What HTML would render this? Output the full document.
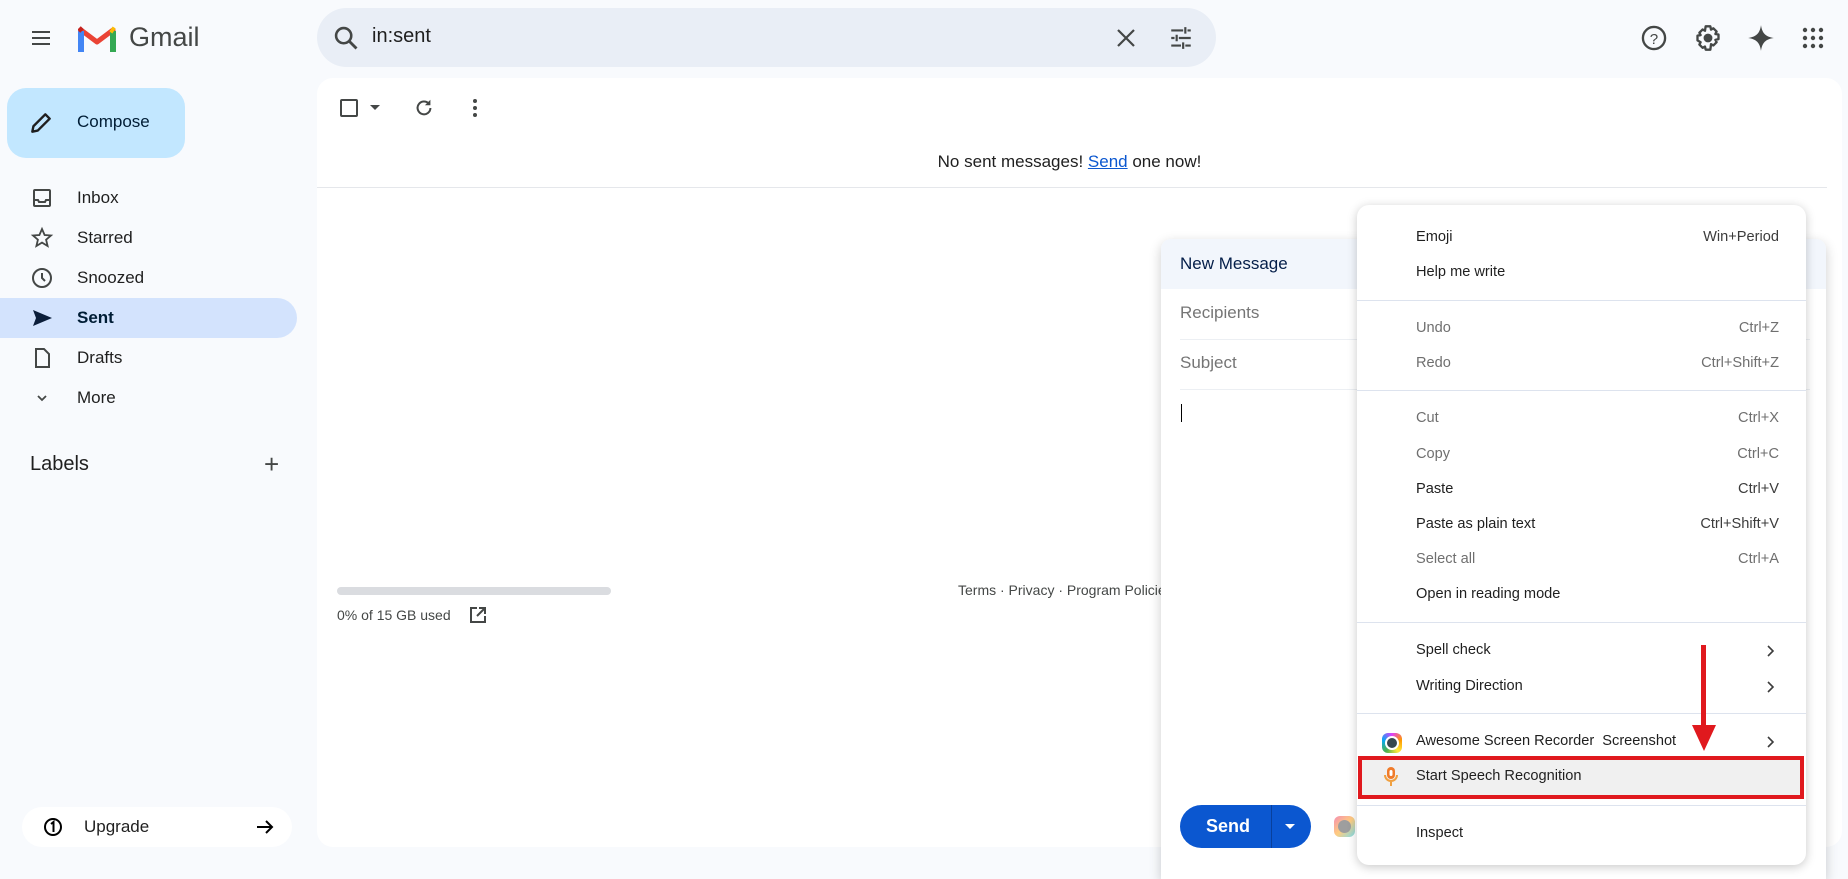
<!DOCTYPE html>
<html><head><meta charset="utf-8"><style>
*{box-sizing:border-box;margin:0;padding:0}
body{width:1848px;height:863px;overflow:hidden;background:#f8fafd;font-family:"Liberation Sans",Arial,sans-serif;color:#1f1f1f;position:relative}
.a{position:absolute}
.nav{position:absolute;left:0;width:297px;height:40px;font-size:17px;display:flex;align-items:center}
.nav .t{position:absolute;left:77px}
.nav svg{position:absolute;left:30px;top:8px}
.mi{position:absolute;left:1416px;font-size:14.6px;color:#1f1f1f}
.ms{position:absolute;right:69px;font-size:14.6px;color:#3c3c3c}
.ch{position:absolute;right:70px;width:14px;height:14px}
.dis{color:#6f6f6f}
.sep{position:absolute;left:1357px;width:449px;height:1px;background:#dde3ee}
</style></head><body>
<!-- header -->
<svg class="a" style="left:29px;top:26px" width="24" height="24" viewBox="0 0 24 24"><path d="M3 6h18M3 12h18M3 18h18" stroke="#444746" stroke-width="2"/></svg>
<svg class="a" style="left:78px;top:24px" width="38" height="29" viewBox="0 0 38 29"><path d="M3 28V6l16 12L35 6v22" fill="none" stroke="#ea4335" stroke-width="5" stroke-linejoin="round"/><path d="M3 28V7" stroke="#4285f4" stroke-width="6"/><path d="M35 28V7" stroke="#34a853" stroke-width="6"/><path d="M33 5l3 2" stroke="#fbbc04" stroke-width="6"/><path d="M1 4l3 3" stroke="#c5221f" stroke-width="5"/></svg>
<div class="a" style="left:129px;top:22px;font-size:27px;color:#444746">Gmail</div>
<div class="a" style="left:317px;top:8px;width:899px;height:59px;border-radius:30px;background:#e9eef6"></div>
<svg class="a" style="left:332px;top:24px" width="28" height="28" viewBox="0 0 24 24"><circle cx="10" cy="10" r="6.5" fill="none" stroke="#444746" stroke-width="2.2"/><path d="M15 15l6 6" stroke="#444746" stroke-width="2.4"/></svg>
<div class="a" style="left:372px;top:25px;font-size:20px;color:#1f1f1f">in:sent</div>
<svg class="a" style="left:1115px;top:27px" width="22" height="22" viewBox="0 0 22 22"><path d="M3 3l16 16M19 3L3 19" stroke="#444746" stroke-width="2.2"/></svg>
<svg class="a" style="left:1168px;top:25px" width="26" height="26" viewBox="0 0 24 24" stroke="#444746" stroke-width="2" fill="none"><path d="M3 5h11M18 5h3M16 2v6M3 12h3M10 12h11M8 9v6M3 19h9M16 19h5M14 16v6"/></svg>
<svg class="a" style="left:1640px;top:24px" width="28" height="28" viewBox="0 0 24 24"><circle cx="12" cy="12" r="9.5" fill="none" stroke="#444746" stroke-width="2"/><text x="12" y="17" font-size="13" text-anchor="middle" fill="#444746" font-family="Liberation Sans">?</text></svg>
<svg class="a" style="left:1694px;top:24px" width="28" height="28" viewBox="0 0 24 24" fill="none" stroke="#444746" stroke-width="2"><path d="M10 2h4l.6 2.8 2-1.1 2.8 2.8-1.1 2 2.7.5v4l-2.7.6 1.1 2-2.8 2.8-2-1.1L14 22h-4l-.6-2.7-2 1.1-2.8-2.8 1.1-2L3 14v-4l2.7-.5-1.1-2 2.8-2.8 2 1.1z" stroke-linejoin="round"/><circle cx="12" cy="12" r="2.8" fill="#444746"/></svg>
<svg class="a" style="left:1747px;top:24px" width="28" height="28" viewBox="0 0 24 24"><path d="M12 1C13 8 16 11 23 12 16 13 13 16 12 23 11 16 8 13 1 12 8 11 11 8 12 1z" fill="#444746"/></svg>
<svg class="a" style="left:1801px;top:26px" width="24" height="24" viewBox="0 0 24 24" fill="#444746"><circle cx="4" cy="4" r="2.2"/><circle cx="12" cy="4" r="2.2"/><circle cx="20" cy="4" r="2.2"/><circle cx="4" cy="12" r="2.2"/><circle cx="12" cy="12" r="2.2"/><circle cx="20" cy="12" r="2.2"/><circle cx="4" cy="20" r="2.2"/><circle cx="12" cy="20" r="2.2"/><circle cx="20" cy="20" r="2.2"/></svg>
<!-- sidebar -->
<div class="a" style="left:7px;top:88px;width:178px;height:70px;border-radius:19px;background:#c2e7ff"></div>
<svg class="a" style="left:28px;top:110px" width="26" height="26" viewBox="0 0 24 24"><path d="M4 20l1-5L16 4l4 4L9 19z" fill="none" stroke="#1f1f1f" stroke-width="2.2" stroke-linejoin="round"/></svg>
<div class="a" style="left:77px;top:112px;font-size:17px;color:#001d35">Compose</div>
<div class="a" style="left:0;top:298px;width:297px;height:40px;border-radius:0 20px 20px 0;background:#d3e3fd"></div>
<div class="nav" style="top:178px"><svg width="24" height="24" viewBox="0 0 24 24" fill="none" stroke="#444746" stroke-width="2"><rect x="4" y="4" width="16" height="16" rx="1"/><path d="M4 14h4l1 2h6l1-2h4"/></svg><span class="t">Inbox</span></div>
<div class="nav" style="top:218px"><svg width="24" height="24" viewBox="0 0 24 24" fill="none" stroke="#444746" stroke-width="1.8"><path d="M12 3l2.6 6 6.4.5-4.9 4.2 1.5 6.3L12 16.6 6.4 20l1.5-6.3L3 9.5 9.4 9z"/></svg><span class="t">Starred</span></div>
<div class="nav" style="top:258px"><svg width="24" height="24" viewBox="0 0 24 24" fill="none" stroke="#444746" stroke-width="2"><circle cx="12" cy="12" r="9"/><path d="M12 7v5l3 3"/></svg><span class="t">Snoozed</span></div>
<div class="nav" style="top:298px;font-weight:bold;color:#001d35"><svg width="24" height="24" viewBox="0 0 24 24"><path d="M3 4l19 8-19 8 3-8z" fill="#0b1e3a"/></svg><span class="t">Sent</span></div>
<div class="nav" style="top:338px"><svg width="24" height="24" viewBox="0 0 24 24" fill="none" stroke="#444746" stroke-width="2"><path d="M6 3h8l5 5v13H6z"/></svg><span class="t">Drafts</span></div>
<div class="nav" style="top:378px"><svg width="24" height="24" viewBox="0 0 24 24" fill="none" stroke="#444746" stroke-width="1.8"><path d="M8 10l4 4 4-4"/></svg><span class="t">More</span></div>
<div class="a" style="left:30px;top:453px;font-size:20px">Labels</div>
<div class="a" style="left:264px;top:449px;font-size:26px;color:#444746">+</div>
<div class="a" style="left:22px;top:807px;width:270px;height:40px;border-radius:20px;background:#fff"></div>
<svg class="a" style="left:43px;top:817px" width="20" height="20" viewBox="0 0 20 20"><circle cx="10" cy="10" r="8" fill="none" stroke="#000" stroke-width="2"/><path d="M8 7l2.5-2v10" fill="none" stroke="#000" stroke-width="2"/></svg>
<div class="a" style="left:84px;top:817px;font-size:17px;color:#1f1f1f">Upgrade</div>
<svg class="a" style="left:254px;top:816px" width="22" height="22" viewBox="0 0 22 22"><path d="M3 11h15M12 5l6 6-6 6" fill="none" stroke="#000" stroke-width="2"/></svg>
<!-- main -->
<div class="a" style="left:317px;top:78px;width:1525px;height:769px;border-radius:16px;background:#fff"></div>
<svg class="a" style="left:338px;top:97px" width="22" height="22" viewBox="0 0 22 22"><rect x="3" y="3" width="16" height="16" rx="1" fill="none" stroke="#444746" stroke-width="2"/></svg>
<svg class="a" style="left:369px;top:104px" width="12" height="8" viewBox="0 0 12 8"><path d="M1 1h10L6 6z" fill="#444746"/></svg>
<svg class="a" style="left:413px;top:97px" width="22" height="22" viewBox="0 0 24 24"><path d="M19 12a7 7 0 1 1-2-5" fill="none" stroke="#444746" stroke-width="2.2"/><path d="M19 3v6h-6z" fill="#444746"/></svg>
<svg class="a" style="left:468px;top:97px" width="14" height="22" viewBox="0 0 14 22" fill="#444746"><circle cx="7" cy="4" r="2"/><circle cx="7" cy="11" r="2"/><circle cx="7" cy="18" r="2"/></svg>
<div class="a" style="left:317px;top:152px;width:1525px;text-align:center;font-size:17px;padding-right:20px">No sent messages! <span style="color:#0b57d0;text-decoration:underline">Send</span> one now!</div>
<div class="a" style="left:317px;top:187px;width:1510px;height:1px;background:#e5e7eb"></div>
<div class="a" style="left:337px;top:587px;width:274px;height:8px;border-radius:4px;background:#dadce0"></div>
<div class="a" style="left:337px;top:607px;font-size:14px;color:#444746">0% of 15 GB used</div>
<svg class="a" style="left:468px;top:605px" width="20" height="20" viewBox="0 0 20 20" fill="none" stroke="#444746" stroke-width="2"><path d="M9 3H3v14h14v-6M11 3h6v6M17 3l-8 8"/></svg>
<div class="a" style="left:958px;top:582px;font-size:14px;color:#444746">Terms · Privacy · Program Policies</div>
<!-- compose window -->
<div class="a" style="left:1161px;top:239px;width:665px;height:640px;background:#fff;border-radius:10px 10px 0 0;box-shadow:0 4px 12px rgba(0,0,0,.2)"></div>
<div class="a" style="left:1161px;top:239px;width:665px;height:50px;background:#f2f6fc;border-radius:10px 10px 0 0"></div>
<div class="a" style="left:1180px;top:254px;font-size:17px;color:#041e49">New Message</div>
<div class="a" style="left:1180px;top:303px;font-size:17px;color:#757575">Recipients</div>
<div class="a" style="left:1180px;top:339px;width:630px;height:1px;background:#eceff3"></div>
<div class="a" style="left:1180px;top:353px;font-size:17px;color:#757575">Subject</div>
<div class="a" style="left:1180px;top:389px;width:630px;height:1px;background:#eceff3"></div>
<div class="a" style="left:1181px;top:404px;width:1px;height:18px;background:#000"></div>
<div class="a" style="left:1180px;top:805px;width:131px;height:43px;border-radius:22px;background:#0b57d0"></div>
<div class="a" style="left:1271px;top:805px;width:1px;height:43px;background:#08409c"></div>
<div class="a" style="left:1206px;top:816px;font-size:18px;color:#fff;font-weight:bold">Send</div>
<svg class="a" style="left:1284px;top:823px" width="12" height="8" viewBox="0 0 12 8"><path d="M1 1h10L6 6z" fill="#fff"/></svg>
<div class="a" style="left:1334px;top:816px;width:21px;height:21px;border-radius:6px;background:linear-gradient(135deg,#f48fb1,#ffcc80,#80deea)"></div>
<div class="a" style="left:1338px;top:820px;width:13px;height:13px;border-radius:50%;background:#9e9e9e"></div>
<!-- context menu -->
<div class="a" style="left:1357px;top:205px;width:449px;height:660px;background:#fff;border-radius:12px;box-shadow:0 2px 10px rgba(0,0,0,.22)"></div>
<div class="mi" style="top:229px">Emoji</div><div class="ms" style="top:229px">Win+Period</div>
<div class="mi" style="top:264px">Help me write</div>
<div class="sep" style="top:300px"></div>
<div class="mi dis" style="top:320px">Undo</div><div class="ms dis" style="top:320px">Ctrl+Z</div>
<div class="mi dis" style="top:355px">Redo</div><div class="ms dis" style="top:355px">Ctrl+Shift+Z</div>
<div class="sep" style="top:390px"></div>
<div class="mi dis" style="top:410px">Cut</div><div class="ms dis" style="top:410px">Ctrl+X</div>
<div class="mi dis" style="top:446px">Copy</div><div class="ms dis" style="top:446px">Ctrl+C</div>
<div class="mi" style="top:481px">Paste</div><div class="ms" style="top:481px">Ctrl+V</div>
<div class="mi" style="top:516px">Paste as plain text</div><div class="ms" style="top:516px">Ctrl+Shift+V</div>
<div class="mi dis" style="top:551px">Select all</div><div class="ms dis" style="top:551px">Ctrl+A</div>
<div class="mi" style="top:586px">Open in reading mode</div>
<div class="sep" style="top:622px"></div>
<div class="mi" style="top:642px">Spell check</div><svg class="ch" style="top:644px" viewBox="0 0 14 14"><path d="M4 2l5 5-5 5" fill="none" stroke="#3c3c3c" stroke-width="1.6"/></svg>
<div class="mi" style="top:678px">Writing Direction</div><svg class="ch" style="top:680px" viewBox="0 0 14 14"><path d="M4 2l5 5-5 5" fill="none" stroke="#3c3c3c" stroke-width="1.6"/></svg>
<div class="sep" style="top:713px"></div>
<div class="a" style="left:1382px;top:733px;width:20px;height:20px;border-radius:6px;background:conic-gradient(#e040fb,#ff9800,#ffeb3b,#4caf50,#03a9f4,#e040fb)"></div>
<div class="a" style="left:1385px;top:736px;width:14px;height:14px;border-radius:50%;background:#37474f;border:2px solid #fff"></div>
<div class="mi" style="top:733px">Awesome Screen Recorder &nbsp;Screenshot</div><svg class="ch" style="top:735px" viewBox="0 0 14 14"><path d="M4 2l5 5-5 5" fill="none" stroke="#3c3c3c" stroke-width="1.6"/></svg>
<div class="a" style="left:1358px;top:756px;width:446px;height:43px;background:#f0f0f0;border:4px solid #e0191e"></div>
<svg class="a" style="left:1383px;top:766px" width="16" height="22" viewBox="0 0 16 22"><rect x="4" y="1" width="8" height="12" rx="4" fill="#f07b2a"/><rect x="6.5" y="4" width="3" height="6" rx="1.5" fill="#fff"/><path d="M2 9a6 6 0 0 0 12 0M8 15v5" fill="none" stroke="#f0a040" stroke-width="2"/></svg>
<div class="mi" style="top:768px">Start Speech Recognition</div>
<div class="sep" style="top:805px"></div>
<div class="mi" style="top:825px">Inspect</div>
<!-- red arrow -->
<div class="a" style="left:1701px;top:645px;width:5px;height:85px;background:#e0191e"></div>
<svg class="a" style="left:1692px;top:725px" width="24" height="26" viewBox="0 0 24 26"><path d="M0 0h24L12 26z" fill="#e0191e"/></svg>
</body></html>
